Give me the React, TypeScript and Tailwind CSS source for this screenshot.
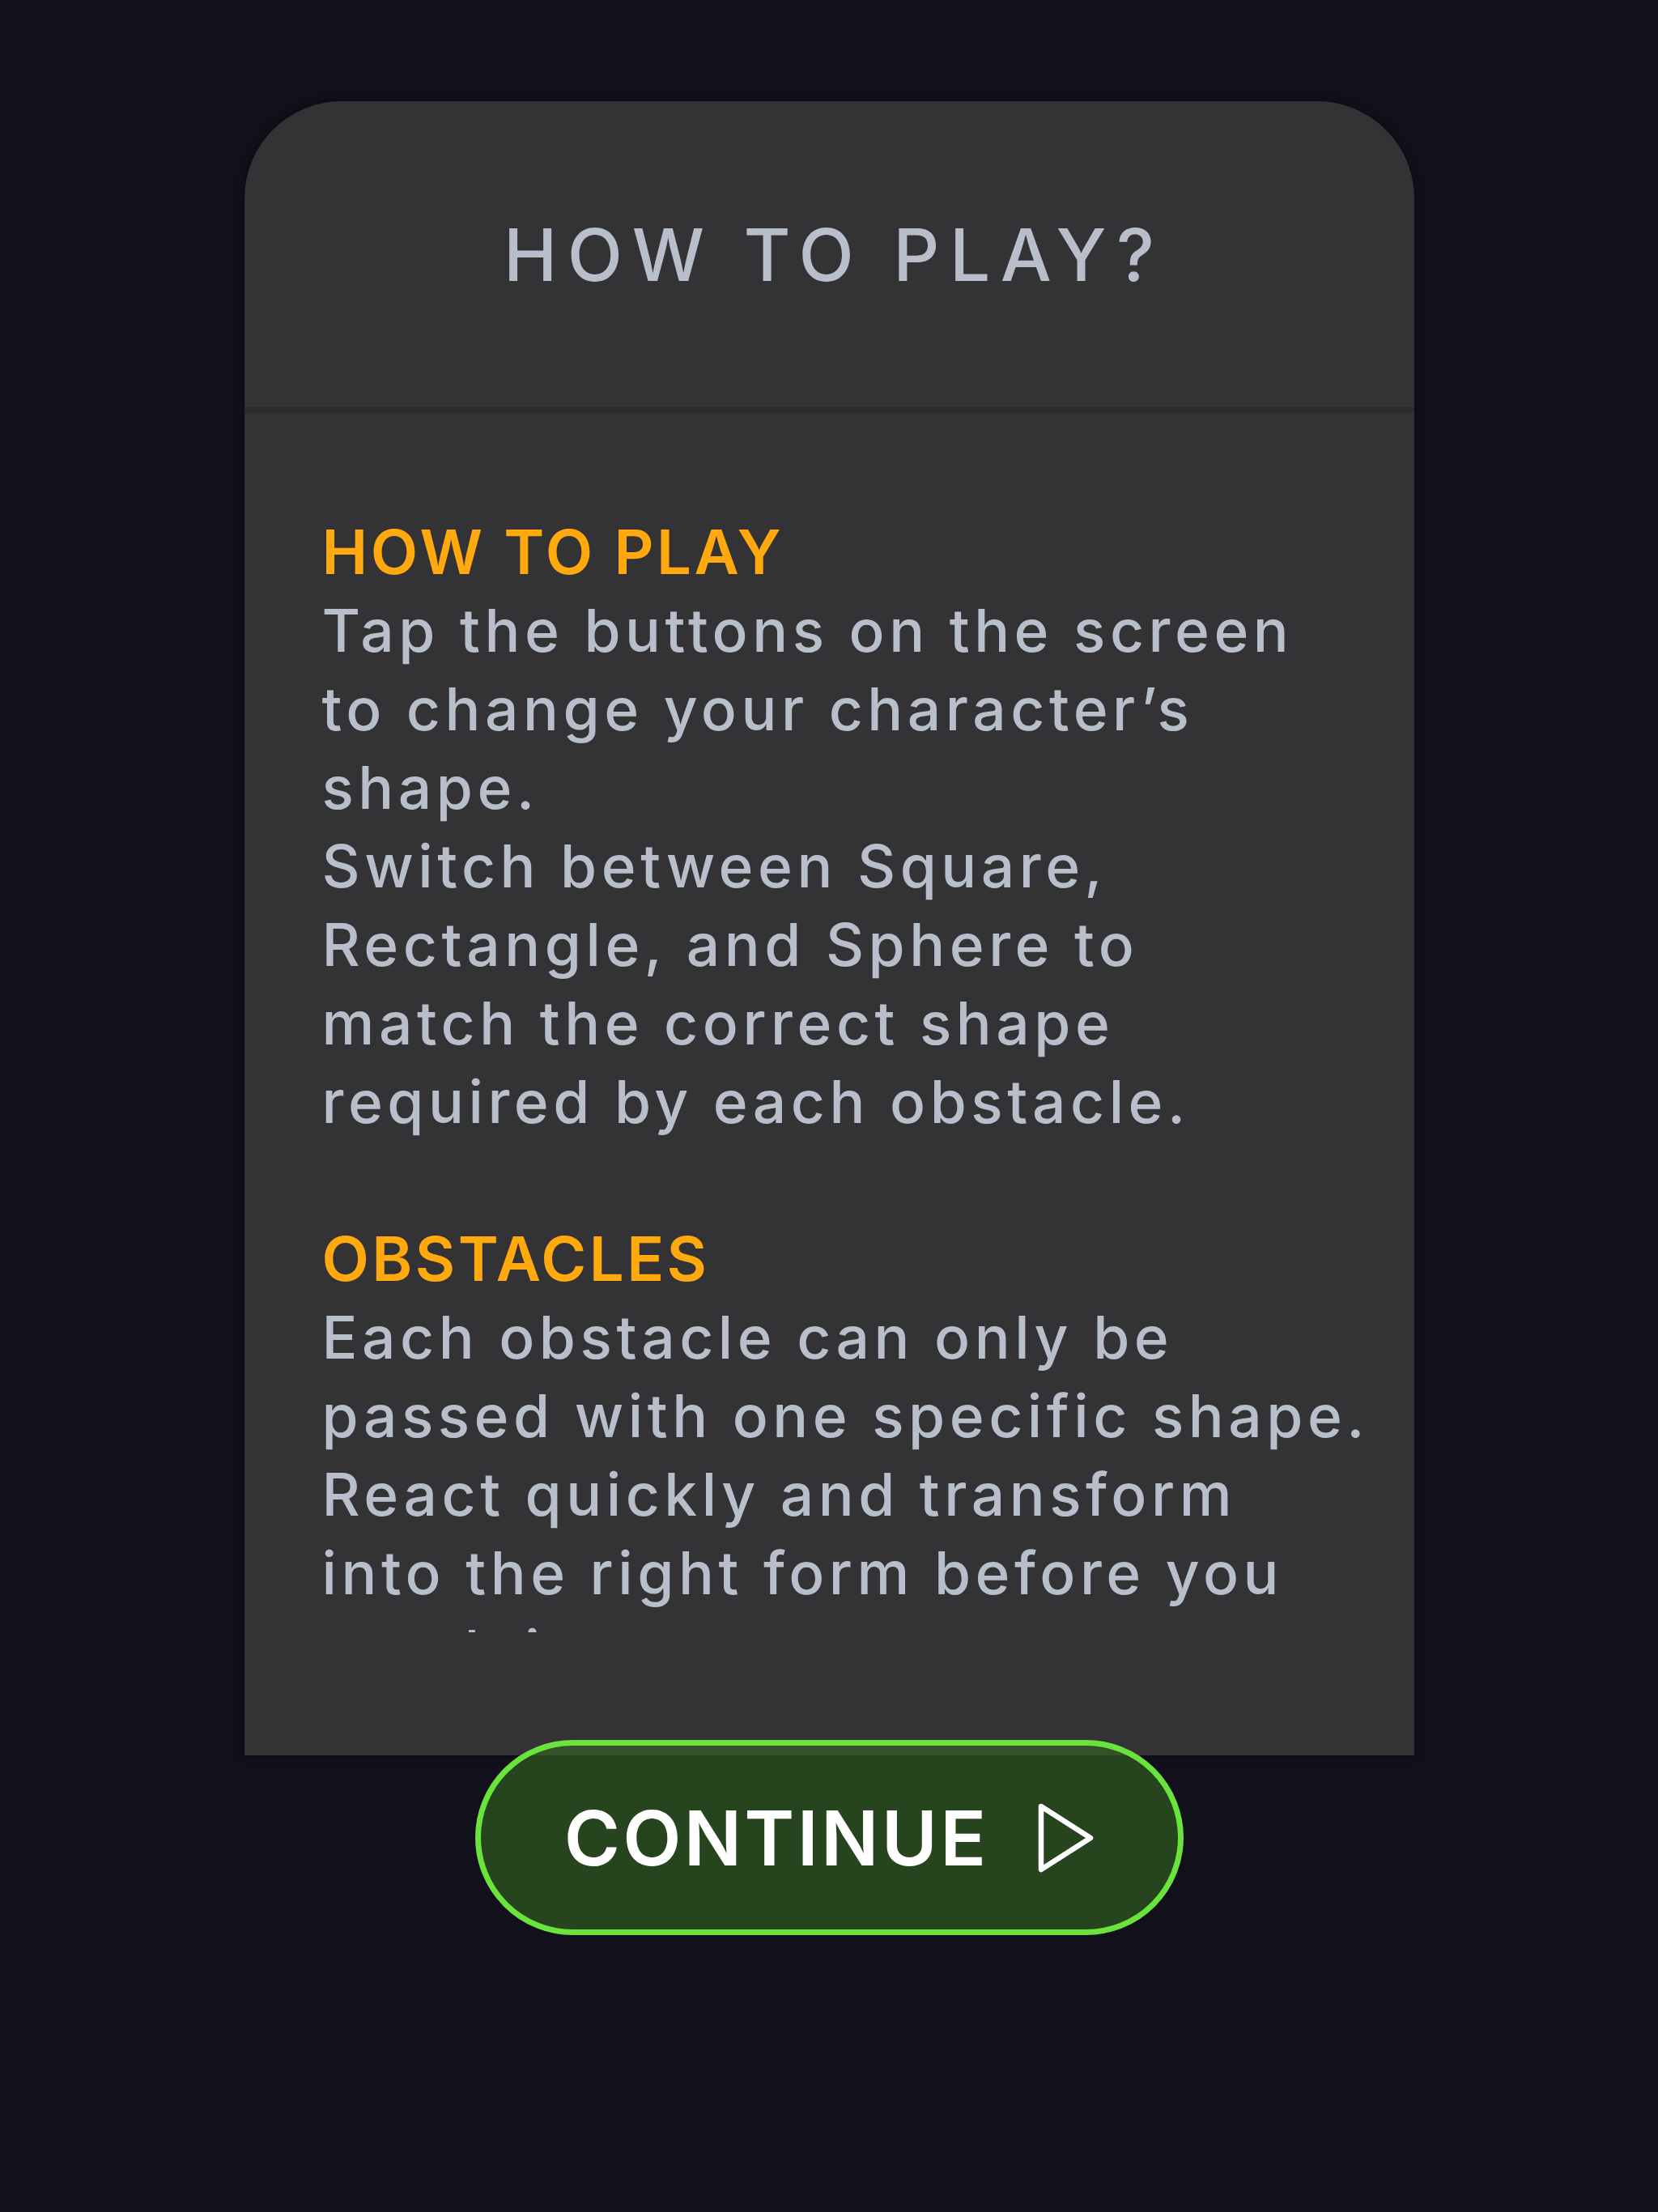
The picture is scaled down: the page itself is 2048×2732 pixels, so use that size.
import React from "react";

const font = { fontFamily: '"Inter", "Noto Sans", sans-serif' };

function PlayIcon() {
  return (
    <svg width="70" height="86" viewBox="0 0 70 86" fill="none" className="shrink-0">
      <path
        d="M5 4 L66 43 L5 82 Z"
        stroke="#ffffff"
        strokeWidth="6.5"
        strokeLinejoin="round"
        strokeLinecap="round"
      />
    </svg>
  );
}

const howLines = [
  "Tap the buttons on the screen",
  "to change your character\u2019s",
  "shape.",
  "Switch between Square,",
  "Rectangle, and Sphere to",
  "match the correct shape",
  "required by each obstacle.",
];

const obsLines = [
  "Each obstacle can only be",
  "passed with one specific shape.",
  "React quickly and transform",
  "into the right form before you",
  "reach it.",
];

export default function App() {
  return (
    <div
      className="min-h-[2732px] w-full bg-[#12111b] flex flex-col items-center pt-[125px]"
      style={font}
    >
      <div className="w-[1445px] rounded-t-[120px] bg-[#333335] shadow-[0_0_10px_rgba(0,0,0,0.45)] flex flex-col">
        <div className="h-[378px] flex items-center justify-center">
          <h1 className="text-[89px] leading-none font-medium tracking-[0.14em] text-[#b8bfca] pl-[0.14em]">
            HOW TO PLAY?
          </h1>
        </div>
        <div className="h-[7px] bg-[#2b2b2d]" />
        <div className="pt-[123px] pb-[152px] pl-[96px] pr-[40px]">
          <div className="h-[1383px] overflow-hidden text-[73px] leading-[97px] font-medium text-[#b8bfca] tracking-[0.076em]">
            <div className="text-[76px] font-semibold text-[#ffa90f] tracking-[0.047em]">HOW TO PLAY</div>
            {howLines.map((l) => (
              <div key={l} className="whitespace-nowrap">{l}</div>
            ))}
            <div className="h-[97px]" />
            <div className="text-[76px] font-semibold text-[#ffa90f] tracking-[0.045em]">OBSTACLES</div>
            {obsLines.map((l) => (
              <div key={l} className="whitespace-nowrap">{l}</div>
            ))}
          </div>
        </div>
      </div>
      <button className="relative z-10 -mt-[19px] w-[875px] h-[241px] rounded-full border-[7px] border-[#6ae43c] bg-[rgba(51,104,34,0.6)] flex items-center justify-center gap-[60px]">
        <span className="text-[94px] leading-none font-semibold text-white tracking-[0.035em]">
          CONTINUE
        </span>
        <PlayIcon />
      </button>
    </div>
  );
}
